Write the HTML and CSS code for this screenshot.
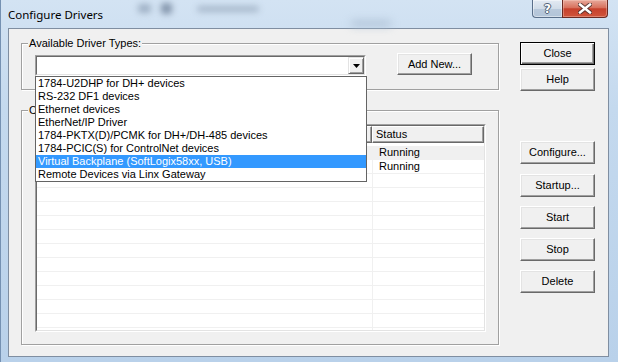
FILE: index.html
```html
<!DOCTYPE html>
<html>
<head>
<meta charset="utf-8">
<title>Configure Drivers</title>
<link rel="stylesheet" href="styles.css">
</head>
<body>
<div class="window">
  <div class="titlebar">
    <span class="smudge s1"></span>
    <span class="smudge s2"></span>
    <span class="smudge s3"></span>
    <span class="smudge s4"></span>
    <div class="title">Configure Drivers</div>
    <div class="caps">
      <div class="cap cap-help"><span class="qmark">?</span></div>
      <div class="cap cap-close">
        <svg width="14" height="11" viewBox="0 0 14 11">
          <path d="M2 1.5 L12 9.5 M12 1.5 L2 9.5" stroke="#3a2a2a" stroke-width="4.4" stroke-linecap="square" fill="none" opacity="0.75"/>
          <path d="M2 1.5 L12 9.5 M12 1.5 L2 9.5" stroke="#ffffff" stroke-width="2.4" stroke-linecap="square" fill="none"/>
        </svg>
      </div>
    </div>
  </div>
  <div class="client">
    <div class="main">
      <div class="group group-types">
        <span class="group-label">Available Driver Types:</span>
        <div class="types-row">
          <div class="combo">
            <div class="combo-inner">
              <div class="combo-field"></div>
              <div class="combo-btn">
                <svg width="7" height="4" viewBox="0 0 7 4"><path d="M0 0 H7 L3.5 4 Z" fill="#000"/></svg>
              </div>
            </div>
            <ul class="dropdown">
              <li>1784-U2DHP for DH+ devices</li>
              <li>RS-232 DF1 devices</li>
              <li>Ethernet devices</li>
              <li>EtherNet/IP Driver</li>
              <li>1784-PKTX(D)/PCMK for DH+/DH-485 devices</li>
              <li>1784-PCIC(S) for ControlNet devices</li>
              <li class="selected">Virtual Backplane (SoftLogix58xx, USB)</li>
              <li>Remote Devices via Linx Gateway</li>
            </ul>
          </div>
          <button class="btn btn-add">Add New...</button>
        </div>
      </div>
      <div class="group group-configured">
        <span class="group-label">C</span>
        <div class="listview">
          <div class="lv-inner">
            <div class="lv-header">
              <div class="lv-hcell"></div>
              <div class="lv-hcell">Status</div>
            </div>
            <div class="lv-rows">
              <div class="lv-row alt"><div class="lv-cell"></div><div class="lv-cell">Running</div></div>
              <div class="lv-row"><div class="lv-cell"></div><div class="lv-cell">Running</div></div>
              <div class="lv-row"><div class="lv-cell"></div><div class="lv-cell"></div></div>
              <div class="lv-row"><div class="lv-cell"></div><div class="lv-cell"></div></div>
              <div class="lv-row"><div class="lv-cell"></div><div class="lv-cell"></div></div>
              <div class="lv-row"><div class="lv-cell"></div><div class="lv-cell"></div></div>
              <div class="lv-row"><div class="lv-cell"></div><div class="lv-cell"></div></div>
              <div class="lv-row"><div class="lv-cell"></div><div class="lv-cell"></div></div>
              <div class="lv-row"><div class="lv-cell"></div><div class="lv-cell"></div></div>
              <div class="lv-row"><div class="lv-cell"></div><div class="lv-cell"></div></div>
              <div class="lv-row"><div class="lv-cell"></div><div class="lv-cell"></div></div>
              <div class="lv-row"><div class="lv-cell"></div><div class="lv-cell"></div></div>
              <div class="lv-row"><div class="lv-cell"></div><div class="lv-cell"></div></div>
              <div class="lv-row"><div class="lv-cell"></div><div class="lv-cell"></div></div>
            </div>
          </div>
        </div>
      </div>
    </div>
    <div class="side">
      <button class="btn btn-default">Close</button>
      <button class="btn btn-help">Help</button>
      <button class="btn btn-configure">Configure...</button>
      <button class="btn btn-next">Startup...</button>
      <button class="btn btn-next">Start</button>
      <button class="btn btn-next">Stop</button>
      <button class="btn btn-next">Delete</button>
    </div>
  </div>
</div>
</body>
</html>
```
FILE: styles.css
```css
* { box-sizing: border-box; }
html, body { margin: 0; padding: 0; }
body {
  width: 618px;
  height: 362px;
  overflow: hidden;
  font-family: "Liberation Sans", Arial, sans-serif;
  font-size: 11px;
  color: #000;
  background: #b9d1ea;
}

.window {
  width: 618px;
  height: 362px;
  display: flex;
  flex-direction: column;
  background: linear-gradient(180deg, #d3e3f3 0%, #c4d9ee 30%, #b9d1ea 100%);
  border-left: 1px solid #7591b2;
  position: relative;
  overflow: hidden;
}

/* title bar */
.titlebar {
  height: 28px;
  flex: none;
  display: flex;
  align-items: flex-start;
  position: relative;
}
.smudge {
  position: absolute;
  filter: blur(3px);
  border-radius: 3px;
}
.s1 { left: 137px; top: 4px; width: 13px; height: 9px; background: #9fb1c5; }
.s2 { left: 160px; top: 3px; width: 11px; height: 11px; background: #8597ad; }
.s3 { left: 196px; top: 6px; width: 62px; height: 6px; background: #a6b7ca; }
.s4 { left: 350px; top: 21px; width: 40px; height: 5px; background: #aabdd2; filter: blur(4px); }
.title {
  position: relative;
  font-family: "Noto Sans", "DejaVu Sans", sans-serif;
  font-size: 11.5px;
  line-height: 16px;
  padding: 7px 0 0 7px;
  color: #000;
}
.caps {
  margin-left: auto;
  margin-right: 10px;
  display: flex;
  position: relative;
}
.cap {
  height: 18px;
  display: flex;
  align-items: center;
  justify-content: center;
  border: 1px solid #5a6f8a;
  border-top: 0;
}
.cap-help {
  width: 30px;
  border-right: 0;
  border-radius: 0 0 0 4px;
  background: linear-gradient(180deg, #e3eaf3 0%, #d1dce8 50%, #b9c9db 51%, #b2c4d8 100%);
  box-shadow: inset 0 0 0 1px rgba(255,255,255,0.45);
}
.qmark {
  font-family: "DejaVu Sans", sans-serif;
  font-weight: bold;
  font-size: 12px;
  line-height: 12px;
  color: #fff;
  text-shadow: 0 0 1px #3c4b5e, 1px 0 0 #56677c, -1px 0 0 #56677c, 0 1px 0 #56677c, 0 -1px 0 #56677c;
}
.cap-close {
  width: 46px;
  border-color: #6b2a22;
  border-radius: 0 0 4px 0;
  background: linear-gradient(180deg, #e7a99b 0%, #d8715d 45%, #c6402c 52%, #d0553b 100%);
  box-shadow: inset 0 0 0 1px rgba(255,220,210,0.35);
}

/* client */
.client {
  margin: 0 9px 0 7px;
  height: 329px;
  flex: none;
  background: #f0f0f0;
  border: 1px solid #7f8ea1;
  display: flex;
}
.main {
  margin: 14px 0 0 12px;
  width: 478px;
  display: flex;
  flex-direction: column;
}
.side {
  margin: 13px 0 0 21px;
  width: 75px;
  display: flex;
  flex-direction: column;
}

/* group boxes */
.group {
  position: relative;
  border: 1px solid #a0a0a0;
  box-shadow: 1px 1px 0 #fff, inset 1px 1px 0 #fff;
}
.group-label {
  position: absolute;
  top: -7px;
  left: 6px;
  padding: 0 1px;
  line-height: 13px;
  background: #f0f0f0;
  white-space: nowrap;
}
.group-types {
  height: 47px;
  padding: 11px 0 0 13px;
}
.group-configured {
  margin-top: 20px;
  height: 235px;
  padding: 13px 0 0 13px;
}

/* combo */
.types-row {
  display: flex;
  align-items: flex-start;
}
.combo {
  position: relative;
  width: 331px;
  height: 21px;
  border: 1px solid;
  border-color: #a0a0a0 #fff #fff #a0a0a0;
  z-index: 5;
}
.combo-inner {
  height: 100%;
  border: 1px solid;
  border-color: #696969 #e3e3e3 #e3e3e3 #696969;
  background: #fff;
  display: flex;
}
.combo-field { flex: 1; }
.combo-btn {
  width: 16px;
  height: 17px;
  background: #f0f0f0;
  border: 1px solid;
  border-color: #e3e3e3 #696969 #696969 #e3e3e3;
  box-shadow: inset 1px 1px 0 #fff, inset -1px -1px 0 #a0a0a0;
  display: flex;
  align-items: center;
  justify-content: center;
}
.combo-btn svg { display: block; margin-top: 1px; }

.dropdown {
  position: absolute;
  top: 20px;
  left: -1px;
  width: 332px;
  margin: 0;
  padding: 0;
  list-style: none;
  background: #fff;
  border: 1px solid #646464;
}
.dropdown li {
  height: 13px;
  line-height: 13px;
  padding-left: 2px;
  white-space: nowrap;
}
.dropdown li.selected {
  background: #3399ff;
  color: #fff;
}

/* buttons */
.btn {
  width: 75px;
  height: 23px;
  padding: 0;
  margin: 0;
  font: inherit;
  color: #000;
  background: #f0f0f0;
  border: 1px solid;
  border-color: #fff #696969 #696969 #fff;
  box-shadow: inset -1px -1px 0 #a0a0a0, inset 1px 1px 0 #e3e3e3;
  text-align: center;
  line-height: 13px;
}
.btn-add {
  margin: -2px 0 0 31px;
  height: 22px;
}
.btn-default {
  border-color: #000;
  box-shadow: inset 1px 1px 0 #fff, inset -1px -1px 0 #696969, inset -2px -2px 0 #a0a0a0;
}
.btn-help { margin-top: 3px; }
.btn-configure { margin-top: 50px; }
.btn-next { margin-top: 9px; }
.btn-configure + .btn-next { margin-top: 10px; }

/* list view */
.listview {
  width: 451px;
  height: 208px;
  border: 1px solid;
  border-color: #a0a0a0 #fff #fff #a0a0a0;
}
.lv-inner {
  height: 100%;
  border: 1px solid;
  border-color: #696969 #e3e3e3 #e3e3e3 #696969;
  background: #fff;
  overflow: hidden;
}
.lv-header {
  display: grid;
  grid-template-columns: 335px 112px;
  height: 17px;
}
.lv-hcell {
  background: #f0f0f0;
  border: 1px solid;
  border-color: #fff #696969 #696969 #fff;
  box-shadow: inset -1px -1px 0 #a0a0a0;
  padding-left: 3px;
  line-height: 14px;
  white-space: nowrap;
  overflow: hidden;
}
.lv-rows { margin-top: 3px; }
.lv-row {
  display: grid;
  grid-template-columns: 336px 1fr;
  height: 14px;
  border-bottom: 1px solid #f0f0f0;
}
.lv-row.alt { background: #f0f0f0; }
.lv-cell {
  line-height: 13px;
  padding-left: 6px;
  white-space: nowrap;
  overflow: hidden;
}
.lv-cell:first-child { border-right: 1px solid #f0f0f0; }
```
